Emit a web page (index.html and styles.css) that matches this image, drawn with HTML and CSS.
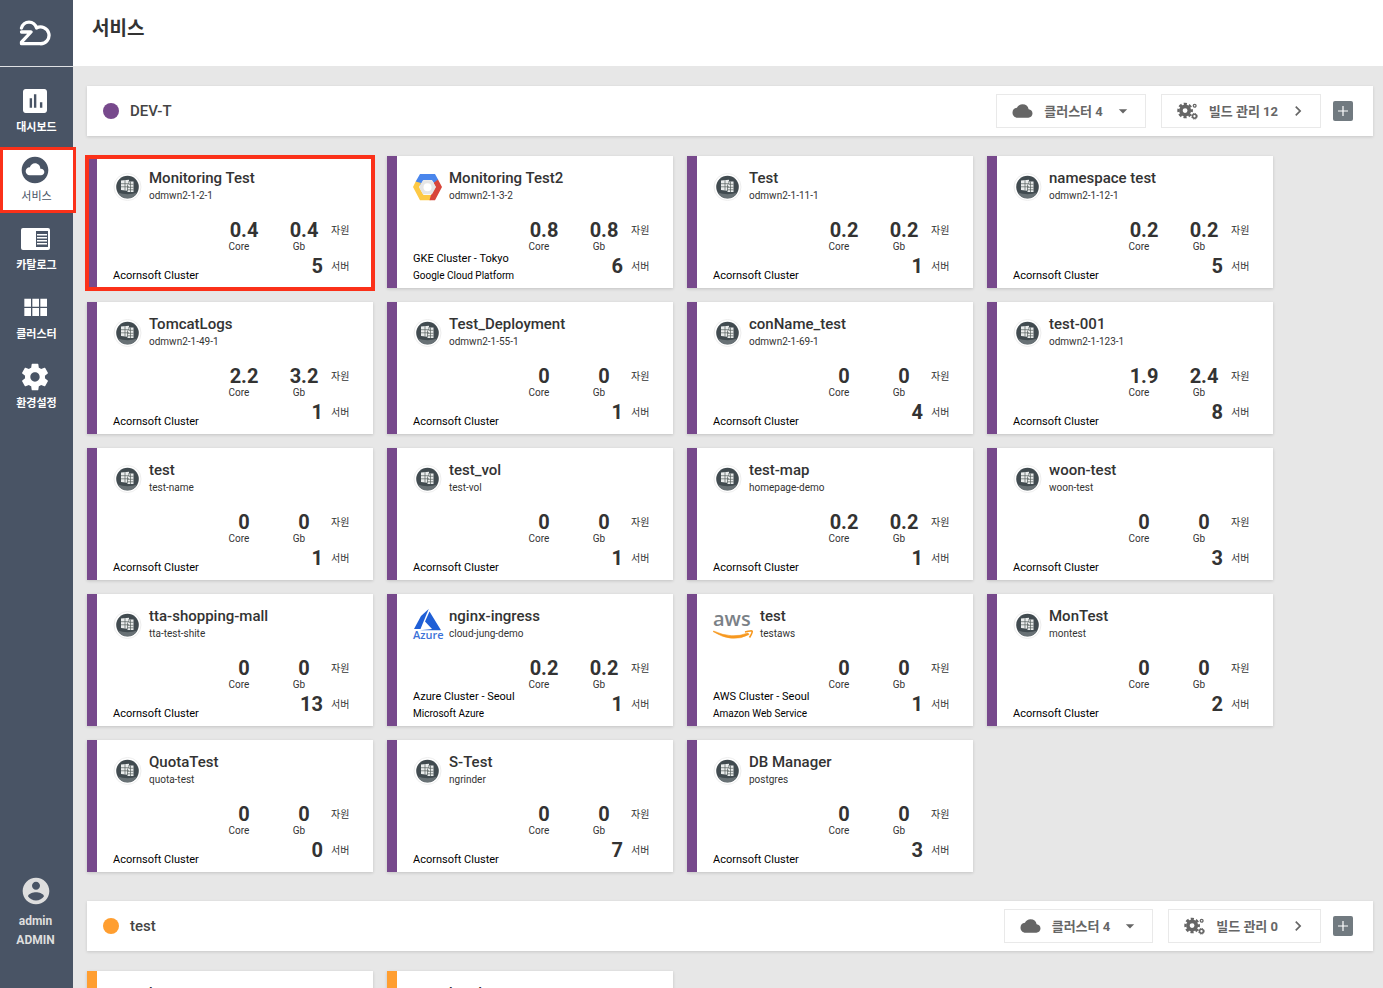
FILE: index.html
```html
<!DOCTYPE html>
<html lang="ko">
<head>
<meta charset="utf-8">
<title>서비스</title>
<link rel="stylesheet" href="styles.css">
</head>
<body>
<svg class="sprite" aria-hidden="true">
  <symbol id="i-cloud" viewBox="0 0 24 24"><path d="M19.35 10.04A7.49 7.49 0 0 0 12 4C9.11 4 6.6 5.64 5.35 8.04A5.994 5.994 0 0 0 0 14c0 3.31 2.69 6 6 6h13c2.76 0 5-2.24 5-5 0-2.64-2.05-4.78-4.65-4.96z"/></symbol>
  <symbol id="i-caret" viewBox="0 0 24 24"><path d="M7 10l5 5 5-5z"/></symbol>
  <symbol id="i-chevron" viewBox="0 0 24 24"><path d="M10 6L8.59 7.41 13.17 12l-4.58 4.59L10 18l6-6z"/></symbol>
  <symbol id="i-gears" viewBox="0 0 22 18">
    <circle cx="8.500" cy="8.500" r="4.400" fill="none" stroke="currentColor" stroke-width="3.800"/>
    <circle cx="8.500" cy="8.500" r="7" fill="none" stroke="currentColor" stroke-width="2.400" stroke-dasharray="3.300 2.198" stroke-dashoffset="1.650"/>
    <circle cx="18.500" cy="3.500" r="1.500" fill="none" stroke="currentColor" stroke-width="1.300"/>
    <circle cx="18.300" cy="14.500" r="2" fill="none" stroke="currentColor" stroke-width="1.600"/>
    <circle cx="18.300" cy="14.500" r="3" fill="none" stroke="currentColor" stroke-width="1" stroke-dasharray="1.400 .956"/>
  </symbol>
  <symbol id="i-plus" viewBox="0 0 20 20"><path d="M10 5v10M5 10h10" stroke="currentColor" stroke-width="1.200"/></symbol>
  <symbol id="i-acornsoft" viewBox="0 0 28 28">
    <circle cx="14" cy="14" r="13.500" fill="#fff" stroke="#eee"/>
    <circle cx="14" cy="14" r="11.300" fill="#414b50"/>
    <path d="M4 19.500a11.300 11.300 0 0 0 20 0q-10 3.500-20 0z" fill="#687175"/>
    <path d="M7.500 7.500l8-.8V8.500h4.500V19h-6v-1.200l-6.500-.8z" fill="#e9ecec"/>
    <path d="M7.500 10.700h8M7.500 13.800h8M15.500 11.300H20M14 14.300h6M14 16.800h6M11.500 7.200v10.300M15.400 8v3.500M14 11.500V18M17 8.500V19" fill="none" stroke="#56605f" stroke-width=".7"/>
  </symbol>
  <symbol id="i-google" viewBox="0 0 29 28">
    <path d="M7 1h15l3.200 5.800-3.500 4.200-3-4H10.500L7 13 2.700 8.500z" fill="#4a86ec"/>
    <path d="M2.700 8.500 0 14l7 13.200h10.500L20 22h-9.500L6 14l2-4z" fill="#fdc945"/>
    <path d="M25 6.500 29 14l-7 13.200h-5.500l1.500-5.200 4.500-8-2-4z" fill="#d8453a"/>
    <path d="M10 7.200h9L23 14l-4 7.200h-9L6 14z" fill="#e6e6e6"/>
    <circle cx="14.500" cy="14.200" r="4" fill="#fff"/>
  </symbol>
  <symbol id="i-azure" viewBox="0 0 29 22">
    <path d="M15.700 0 8 7 1 20h6.500z" fill="#1f5fd6"/>
    <path d="M16.500 2.500 12 12.500l7 7.500-12 1.200H28z" fill="#1f5fd6"/>
  </symbol>
  <symbol id="i-smile" viewBox="0 0 40 12">
    <path d="M0 1.500Q19 13.500 36 4.500L35 3Q19 9.500 .5 1z" fill="#f7981f" stroke="#f7981f" stroke-width=".6"/>
    <path d="M32 2q7-1.800 7.200-.6T36.500 7.500" fill="none" stroke="#f7981f" stroke-width="1.600"/>
  </symbol>
</svg>

<div class="app">
  <aside class="sidebar">
    <a class="logo" href="#" aria-label="홈">
      <svg viewBox="0 0 32 28"><path d="M2.500 9A7.700 7.700 0 0 1 17.500 9 8.400 8.400 0 1 1 21 24.700H2.500V23.200L12 13H2.500" fill="none" stroke="#fff" stroke-width="3.300" stroke-linejoin="round" stroke-linecap="round"/></svg>
    </a>
    <nav class="nav">
      <a class="nav-item" href="#"><svg viewBox="0 0 24 24"><path d="M19 3H5c-1.100 0-2 .9-2 2v14c0 1.100.9 2 2 2h14c1.100 0 2-.9 2-2V5c0-1.100-.9-2-2-2zM9.800 17H8v-7h1.800v7zm3.200 0h-1.800V7H13v10zm4.500 0h-1.800v-4h1.800v4z"/></svg>대시보드</a>
      <a class="nav-item active" href="#"><svg viewBox="0 0 24 24"><path d="M12 2C6.480 2 2 6.480 2 12s4.480 10 10 10 10-4.480 10-10S17.520 2 12 2zm4.500 14H8c-1.660 0-3-1.340-3-3s1.340-3 3-3l.14.01C8.580 8.280 10.130 7 12 7c2.210 0 4 1.790 4 4h.5c1.380 0 2.500 1.120 2.500 2.500S17.880 16 16.500 16z"/></svg>서비스</a>
      <a class="nav-item" href="#"><svg viewBox="0 0 32 32"><path fill-rule="evenodd" d="M4 5h25q2 0 2 2v18q0 2-2 2H4q-2 0-2-2V7q0-2 2-2zM17 8v16h12V8zM18 11h10v1.500h-10zM18 14h10v1.500h-10zM18 17h10v1.500h-10zM18 20h10v1.500h-10z"/></svg>카탈로그</a>
      <a class="nav-item" href="#"><svg viewBox="0 0 24 24"><path d="M4 11h5V5H4v6zm0 7h5v-6H4v6zm6 0h5v-6h-5v6zm6 0h5v-6h-5v6zm-6-7h5V5h-5v6zm6-6v6h5V5h-5z"/></svg>클러스터</a>
      <a class="nav-item" href="#"><svg viewBox="0 0 24 24"><path d="M19.430 12.980c.04-.32.07-.64.07-.98s-.03-.66-.07-.98l2.110-1.650c.19-.15.24-.42.12-.64l-2-3.460c-.12-.22-.39-.3-.61-.22l-2.490 1c-.52-.4-1.080-.73-1.690-.98l-.38-2.650C14.460 2.180 14.250 2 14 2h-4c-.25 0-.46.18-.49.42l-.38 2.650c-.61.25-1.170.59-1.690.98l-2.490-1c-.23-.09-.49 0-.61.22l-2 3.460c-.13.22-.07.49.12.64l2.110 1.650c-.04.32-.07.65-.07.98s.03.66.07.98l-2.110 1.650c-.19.15-.24.42-.12.64l2 3.460c.12.22.39.3.61.22l2.490-1c.52.4 1.080.73 1.690.98l.38 2.650c.03.24.24.42.49.42h4c.25 0 .46-.18.49-.42l.38-2.650c.61-.25 1.170-.59 1.690-.98l2.490 1c.23.09.49 0 .61-.22l2-3.460c.12-.22.07-.49-.12-.64l-2.110-1.650zM12 15.500c-1.930 0-3.500-1.570-3.500-3.500s1.570-3.500 3.500-3.500 3.500 1.570 3.500 3.500-1.570 3.500-3.500 3.500z"/></svg>환경설정</a>
    </nav>
    <a class="account" href="#">
      <svg viewBox="0 0 24 24"><path d="M12 2C6.480 2 2 6.480 2 12s4.480 10 10 10 10-4.480 10-10S17.520 2 12 2zm0 3c1.660 0 3 1.340 3 3s-1.340 3-3 3-3-1.340-3-3 1.340-3 3-3zm0 14.200c-2.500 0-4.710-1.280-6-3.220.03-1.990 4-3.080 6-3.080 1.990 0 5.970 1.090 6 3.080-1.290 1.940-3.500 3.220-6 3.220z"/></svg>
      <span>admin</span>
      <span>ADMIN</span>
    </a>
  </aside>

  <div class="page">
    <header class="topbar"><h1>서비스</h1></header>
    <main class="content">
      <section class="group group-purple">
        <div class="group-bar">
          <h2>DEV-T</h2>
          <button class="btn btn-menu" type="button"><svg class="btn-icon"><use href="#i-cloud"/></svg>클러스터 4<svg class="btn-arrow"><use href="#i-caret"/></svg></button>
          <button class="btn" type="button"><svg class="btn-icon"><use href="#i-gears"/></svg>빌드 관리 12<svg class="btn-arrow"><use href="#i-chevron"/></svg></button>
          <button class="btn-add" type="button" aria-label="추가"><svg><use href="#i-plus"/></svg></button>
        </div>
        <div class="cards" id="cards-dev"></div>
      </section>
      <section class="group group-orange">
        <div class="group-bar">
          <h2>test</h2>
          <button class="btn btn-menu" type="button"><svg class="btn-icon"><use href="#i-cloud"/></svg>클러스터 4<svg class="btn-arrow"><use href="#i-caret"/></svg></button>
          <button class="btn" type="button"><svg class="btn-icon"><use href="#i-gears"/></svg>빌드 관리 0<svg class="btn-arrow"><use href="#i-chevron"/></svg></button>
          <button class="btn-add" type="button" aria-label="추가"><svg><use href="#i-plus"/></svg></button>
        </div>
        <div class="cards" id="cards-test"></div>
      </section>
    </main>
  </div>
</div>
<script src="app.js"></script>
</body>
</html>
```
FILE: styles.css
```css
* { box-sizing: border-box; }

body {
  margin: 0;
  height: 100vh;
  overflow: hidden;
  background: #e7e7e7;
  color: #333;
  font-family: Roboto, "Noto Sans CJK KR", sans-serif;
  font-size: 11px;
}

h1, h2, h3, p { margin: 0; }
a { color: inherit; text-decoration: none; }
svg { display: block; flex: none; fill: currentColor; }
.sprite { position: absolute; width: 0; height: 0; }

.app { display: flex; height: 100%; }

/* Sidebar */
.sidebar {
  display: flex;
  flex-direction: column;
  flex: none;
  width: 73px;
  background: #495465;
  color: #fff;
}
.logo {
  display: flex;
  align-items: center;
  justify-content: center;
  height: 67px;
  padding-right: 3px;
  border-bottom: 1px solid #dfe1e4;
}
.logo svg { width: 32px; height: 28px; }
.nav {
  display: flex;
  flex-direction: column;
  gap: 5px;
  padding-top: 13px;
}
.nav-item {
  position: relative;
  display: flex;
  flex-direction: column;
  align-items: center;
  gap: 3px;
  height: 64px;
  padding-top: 5px;
  font-weight: 700;
  line-height: 16px;
}
.nav-item svg { width: 32px; height: 32px; margin-right: 3px; }
.nav-item.active { background: #fff; color: #495465; font-weight: 400; }
.nav-item.active::after {
  content: "";
  position: absolute;
  inset: -2px -3px 0 0;
  border: 3px solid #fb3119;
}
.account {
  display: flex;
  flex-direction: column;
  align-items: center;
  margin-top: auto;
  padding: 0 2px 38px 0;
  color: #dedede;
  font-size: 12px;
  font-weight: 700;
  line-height: 19px;
}
.account svg { width: 32px; height: 32px; margin-bottom: 5px; }

/* Page */
.page { flex: 1; min-width: 0; }
.topbar {
  height: 66px;
  padding: 15px 19px;
  background: #fff;
}
.topbar h1 { font-size: 19px; font-weight: 700; line-height: 28px; }
.content {
  display: flex;
  flex-direction: column;
  gap: 29px;
  padding: 20px 10px 0 14px;
}

/* Service group */
.group-purple { --accent: #77498c; }
.group-orange { --accent: #ff9e30; }
.group-bar {
  display: flex;
  align-items: center;
  height: 50px;
  padding: 0 20px 0 16px;
  background: #fff;
  box-shadow: 0 1px 3px rgba(0, 0, 0, .14);
}
.group-bar h2 {
  display: flex;
  align-items: center;
  gap: 11px;
  margin-right: auto;
  color: #444;
  font-size: 15px;
  font-weight: 500;
}
.group-bar h2::before {
  content: "";
  width: 16px;
  height: 16px;
  border-radius: 50%;
  background: var(--accent);
}
.btn {
  display: flex;
  align-items: center;
  height: 34px;
  margin-right: 12px;
  padding: 0 12px 2px 15px;
  border: 1px solid #e9e9e9;
  background: #fff;
  color: #666;
  font-family: inherit;
  font-size: 13px;
  font-weight: 700;
}
.btn-menu { margin-right: 15px; }
.btn svg { margin-top: 2px; }
.btn-icon { width: 21px; height: 20px; margin-right: 11px; }
.btn-arrow { width: 20px; height: 20px; margin-left: 10px; }
.btn-add {
  padding: 0;
  border: 0;
  border-radius: 2px;
  background: #717a80;
  color: #fff;
}
.btn-add svg { width: 20px; height: 20px; }

/* Service cards */
.cards {
  display: grid;
  grid-template-columns: repeat(auto-fill, 286px);
  gap: 14px;
  padding-top: 20px;
}
.card {
  position: relative;
  display: flex;
  flex-direction: column;
  justify-content: space-between;
  min-height: 132px;
  padding: 13px 24px 0 16px;
  border-left: 10px solid var(--accent);
  background: #fff;
  box-shadow: 0 1px 3px rgba(0, 0, 0, .16);
}
.card.marked::after {
  content: "";
  position: absolute;
  inset: -1px -2px -3px -12px;
  border: 4px solid #fb3119;
}
.card-head { display: flex; gap: 7px; }
.card-head h3 { font-size: 15px; font-weight: 500; line-height: 18px; }
.card-head p { font-size: 10px; line-height: 17px; }
.icon { width: 29px; height: 28px; margin-top: 4px; }
.mark { line-height: 1; }
.mark span { display: block; font-family: "Open Sans", sans-serif; font-weight: 600; }
.mark-azure { width: 29px; padding-top: 2px; }
.mark-azure svg { width: 29px; height: 22px; }
.mark-azure span { color: #3c72d8; font-size: 11px; line-height: 8px; }
.mark-aws { width: 40px; }
.mark-aws span { color: #7b8187; font-size: 20px; line-height: 23px; }
.mark-aws svg { width: 40px; height: 12px; }
.card-body { display: flex; justify-content: space-between; align-items: flex-end; }
.provider { padding-bottom: 4px; color: #000; line-height: 17px; white-space: nowrap; }
.provider p + p { font-size: 10px; }
.metrics { padding-bottom: 10px; }
.row { display: flex; justify-content: flex-end; }
.row + .row { margin-top: 2px; }
.cell { width: 54px; text-align: center; }
.cell:first-child { margin-right: 6px; }
.value { display: block; font-size: 20px; font-weight: 700; line-height: 20px; }
.unit { display: block; padding-right: 10px; font-size: 10px; line-height: 14px; }
.servers { margin-right: 8px; }
.label { width: 18px; font-size: 10px; line-height: 22px; white-space: nowrap; }
```
FILE: app.js
```js
const marks = {
  acornsoft: '<svg class="icon"><use href="#i-acornsoft"/></svg>',
  google: '<svg class="icon"><use href="#i-google"/></svg>',
  azure: '<div class="mark mark-azure"><svg><use href="#i-azure"/></svg><span>Azure</span></div>',
  aws: '<div class="mark mark-aws"><span>aws</span><svg><use href="#i-smile"/></svg></div>'
};

const providers = {
  acornsoft: ['Acornsoft Cluster'],
  google: ['GKE Cluster - Tokyo', 'Google Cloud Platform'],
  azure: ['Azure Cluster - Seoul', 'Microsoft Azure'],
  aws: ['AWS Cluster - Seoul', 'Amazon Web Service']
};

// name, namespace, cores, memory, servers, provider
const dev = [
  ['Monitoring Test', 'odmwn2-1-2-1', '0.4', '0.4', 5],
  ['Monitoring Test2', 'odmwn2-1-3-2', '0.8', '0.8', 6, 'google'],
  ['Test', 'odmwn2-1-11-1', '0.2', '0.2', 1],
  ['namespace test', 'odmwn2-1-12-1', '0.2', '0.2', 5],
  ['TomcatLogs', 'odmwn2-1-49-1', '2.2', '3.2', 1],
  ['Test_Deployment', 'odmwn2-1-55-1', '0', '0', 1],
  ['conName_test', 'odmwn2-1-69-1', '0', '0', 4],
  ['test-001', 'odmwn2-1-123-1', '1.9', '2.4', 8],
  ['test', 'test-name', '0', '0', 1],
  ['test_vol', 'test-vol', '0', '0', 1],
  ['test-map', 'homepage-demo', '0.2', '0.2', 1],
  ['woon-test', 'woon-test', '0', '0', 3],
  ['tta-shopping-mall', 'tta-test-shite', '0', '0', 13],
  ['nginx-ingress', 'cloud-jung-demo', '0.2', '0.2', 1, 'azure'],
  ['test', 'testaws', '0', '0', 1, 'aws'],
  ['MonTest', 'montest', '0', '0', 2],
  ['QuotaTest', 'quota-test', '0', '0', 0],
  ['S-Test', 'ngrinder', '0', '0', 7],
  ['DB Manager', 'postgres', '0', '0', 3]
];

const test = [
  ['host', 'host', '0', '0', 1],
  ['head', 'head', '0', '0', 1]
];

function card([name, namespace, cores, memory, servers, provider = 'acornsoft'], marked) {
  return `<article class="card${marked ? ' marked' : ''}">
    <div class="card-head">${marks[provider]}<div><h3>${name}</h3><p>${namespace}</p></div></div>
    <div class="card-body">
      <div class="provider">${providers[provider].map(line => `<p>${line}</p>`).join('')}</div>
      <div class="metrics">
        <div class="row">
          <div class="cell"><span class="value">${cores}</span><span class="unit">Core</span></div>
          <div class="cell"><span class="value">${memory}</span><span class="unit">Gb</span></div>
          <span class="label">자원</span>
        </div>
        <div class="row"><span class="value servers">${servers}</span><span class="label">서버</span></div>
      </div>
    </div>
  </article>`;
}

document.getElementById('cards-dev').innerHTML = dev.map((d, i) => card(d, i === 0)).join('');
document.getElementById('cards-test').innerHTML = test.map(d => card(d, false)).join('');
```
